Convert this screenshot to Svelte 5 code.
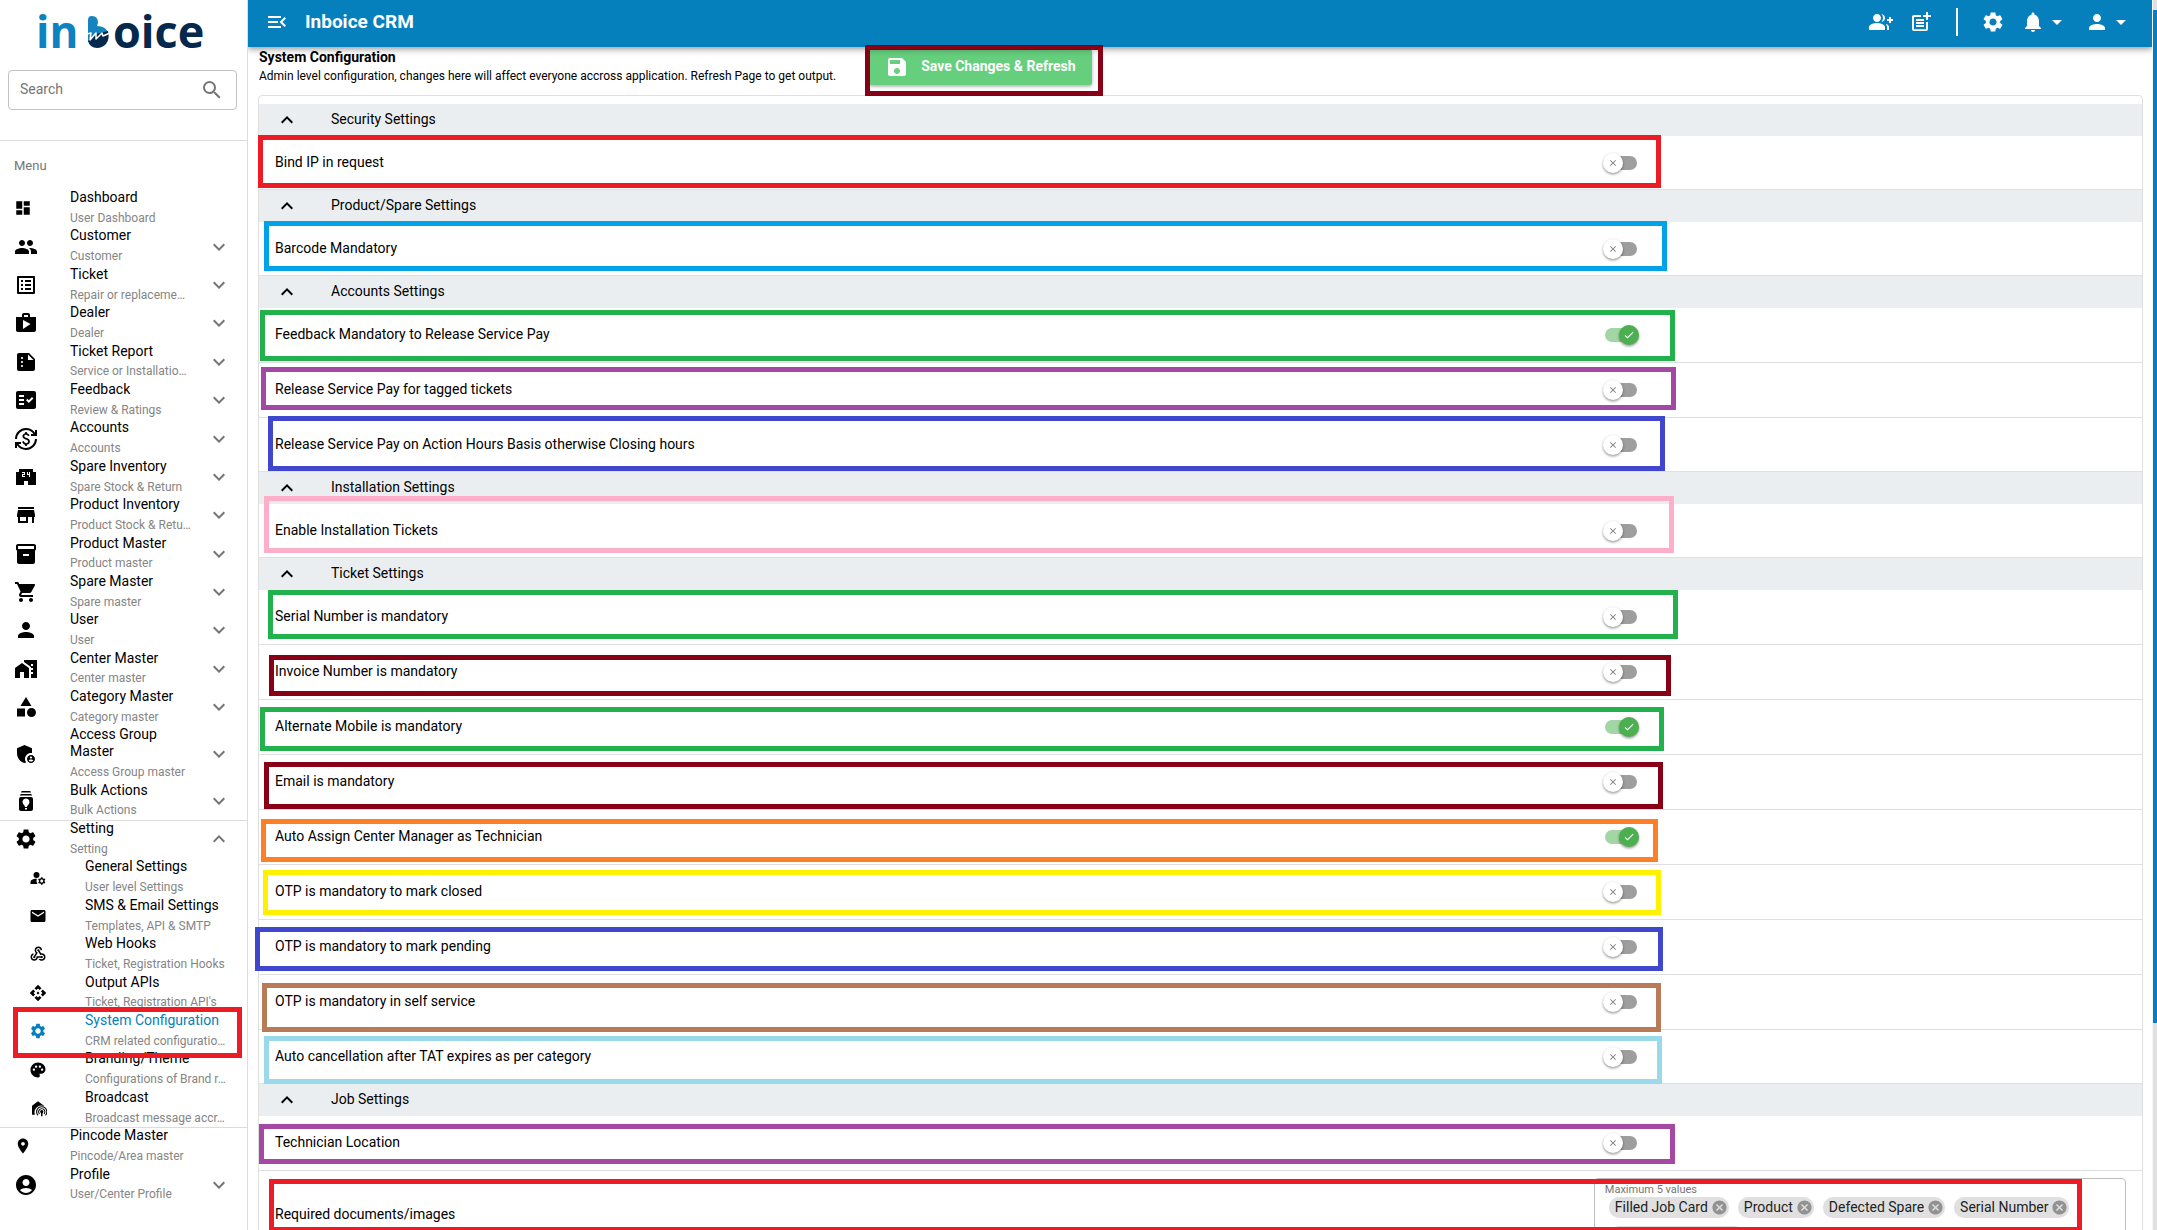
<script>
  const icons = {
    dashboard: 'M3 13h8V3H3v10zm0 8h8v-6H3v6zm10 0h8V11h-8v10zm0-18v6h8V3h-8z',
    group: 'M16 11c1.66 0 2.99-1.34 2.99-3S17.66 5 16 5c-1.66 0-3 1.34-3 3s1.34 3 3 3zm-8 0c1.66 0 2.99-1.34 2.99-3S9.66 5 8 5C6.34 5 5 6.34 5 8s1.34 3 3 3zm0 2c-2.33 0-7 1.17-7 3.5V19h14v-2.5c0-2.33-4.67-3.5-7-3.5zm8 0c-.29 0-.62.02-.97.05 1.16.84 1.97 1.97 1.97 3.45V19h6v-2.5c0-2.33-4.67-3.5-7-3.5z',
    listAlt: 'M19 5v14H5V5h14m1.1-2H3.9c-.5 0-.9.4-.9.9v16.2c0 .4.4.9.9.9h16.2c.4 0 .9-.5.9-.9V3.9c0-.5-.5-.9-.9-.9zM11 7h6v2h-6V7zm0 4h6v2h-6v-2zm0 4h6v2h-6zM7 7h2v2H7zm0 4h2v2H7zm0 4h2v2H7z',
    shop: 'M16 6V4c0-1.11-.89-2-2-2h-4c-1.11 0-2 .89-2 2v2H2v13c0 1.11.89 2 2 2h16c1.11 0 2-.89 2-2V6h-6zm-6-2h4v2h-4V4zM9 18V9l7.5 4L9 18z',
    summarize: 'M15 3H5c-1.1 0-1.99.9-1.99 2L3 19c0 1.1.89 2 1.99 2H19c1.1 0 2-.9 2-2V9l-6-6zM8 17c-.55 0-1-.45-1-1s.45-1 1-1 1 .45 1 1-.45 1-1 1zm0-4c-.55 0-1-.45-1-1s.45-1 1-1 1 .45 1 1-.45 1-1 1zm0-4c-.55 0-1-.45-1-1s.45-1 1-1 1 .45 1 1-.45 1-1 1zm6 1V4.5l5.5 5.5H14z',
    factCheck: 'M20 3H4c-1.1 0-2 .9-2 2v14c0 1.1.9 2 2 2h16c1.1 0 2-.9 2-2V5c0-1.1-.9-2-2-2zM10 17H5v-2h5v2zm0-4H5v-2h5v2zm0-4H5V7h5v2zm4.82 6L12 12.16l1.41-1.41 1.41 1.42L17.99 9l1.42 1.42L14.82 15z',
    currency: 'M12.89 11.1c-1.78-.59-2.64-.96-2.64-1.9 0-1.02 1.11-1.39 1.81-1.39 1.31 0 1.79.99 1.9 1.34l1.58-.67c-.15-.44-.82-1.91-2.66-2.23V5h-1.75v1.26c-2.6.56-2.62 2.85-2.62 2.96 0 2.27 2.25 2.91 3.35 3.31 1.58.56 2.28 1.07 2.28 2.03 0 1.13-1.05 1.61-1.98 1.61-1.82 0-2.34-1.87-2.4-2.09l-1.66.67c.63 2.19 2.28 2.78 3.02 2.96V19h1.75v-1.24c.52-.09 3.02-.59 3.02-3.22.01-1.39-.6-2.61-3-3.44zM3 21H1v-6h6v2H4.52c1.61 2.41 4.36 4 7.48 4a9 9 0 0 0 9-9h2c0 6.08-4.92 11-11 11-3.72 0-7.01-1.85-9-4.67V21zm-2-9C1 5.92 5.92 1 12 1c3.72 0 7.01 1.85 9 4.67V3h2v6h-6V7h2.48C17.87 4.59 15.12 3 12 3a9 9 0 0 0-9 9H1z',
    convenience: 'M19 7V4H5v3H2v13h8v-4h4v4h8V7h-3zm-8 3H9v1h2v1H8V9h2V8H8V7h3v3zm5 2h-1v-2h-2V7h1v2h1V7h1v5z',
    store: 'M20 4H4v2h16V4zm1 10v-2l-1-5H4l-1 5v2h1v6h10v-6h4v6h2v-6h1zm-9 4H6v-4h6v4z',
    inventory: 'M20 2H4c-1 0-2 .9-2 2v3.01c0 .72.43 1.34 1 1.69V20c0 1.1 1.1 2 2 2h14c.9 0 2-.9 2-2V8.7c.57-.35 1-.97 1-1.69V4c0-1.1-1-2-2-2zm-5 12H9v-2h6v2zm5-7H4V4h16v3z',
    cart: 'M7 18c-1.1 0-1.99.9-1.99 2S5.9 22 7 22s2-.9 2-2-.9-2-2-2zM1 2v2h2l3.6 7.59-1.35 2.45c-.16.28-.25.61-.25.96 0 1.1.9 2 2 2h12v-2H7.42c-.14 0-.25-.11-.25-.25l.03-.12.9-1.63h7.45c.75 0 1.41-.41 1.75-1.03l3.58-6.49A1.003 1.003 0 0020 4H5.21l-.94-2H1zm16 16c-1.1 0-1.99.9-1.99 2s.89 2 1.99 2 2-.9 2-2-.9-2-2-2z',
    person: 'M12 12c2.21 0 4-1.79 4-4s-1.79-4-4-4-4 1.79-4 4 1.79 4 4 4zm0 2c-2.67 0-8 1.34-8 4v2h16v-2c0-2.66-5.33-4-8-4z',
    homeWork: 'M1 11v10h5v-6h4v6h5V11L8 6zM10 3v1.97l7 5V11h2v2h-2v2h2v2h-2v4h6V3H10zm9 6h-2V7h2v2z',
    category: 'M12 2l-5.5 9h11zM3 13.5h8v8H3zM17.5 13a4.5 4.5 0 1 0 0 9 4.5 4.5 0 0 0 0-9z',
    admin: 'M17 11c.34 0 .67.04 1 .09V6.27L10.5 3 3 6.27v4.91c0 4.54 3.2 8.79 7.5 9.82.55-.13 1.08-.32 1.6-.55-.69-.98-1.1-2.17-1.1-3.45 0-3.31 2.69-6 6-6zM17 13c-2.21 0-4 1.79-4 4s1.79 4 4 4 4-1.79 4-4-1.79-4-4-4zm0 1.38c.62 0 1.12.51 1.12 1.12s-.51 1.12-1.12 1.12-1.12-.51-1.12-1.12.5-1.12 1.12-1.12zm0 5.37c-.93 0-1.74-.46-2.24-1.17.05-.72 1.51-1.08 2.24-1.08s2.19.36 2.24 1.08c-.5.71-1.31 1.17-2.24 1.17z',
    batch: 'M17 8H7c-1.1 0-2 .9-2 2v10c0 1.1.9 2 2 2h10c1.1 0 2-.9 2-2V10c0-1.1-.9-2-2-2zm-4 12.5h-2V19h2v1.5zm0-2.5h-2c0-1.5-2.5-3-2.5-5 0-1.93 1.57-3.5 3.5-3.5s3.5 1.57 3.5 3.5c0 2-2.5 3.5-2.5 5zm5-11.5H6C6 5.67 6.67 5 7.5 5h9c.83 0 1.5.67 1.5 1.5zm-1-3H7C7 2.67 7.67 2 8.5 2h7c.83 0 1.5.67 1.5 1.5z',
    settings: 'M19.14 12.94c.04-.3.06-.61.06-.94 0-.32-.02-.64-.07-.94l2.03-1.58c.18-.14.23-.41.12-.61l-1.92-3.32c-.12-.22-.37-.29-.59-.22l-2.39.96c-.5-.38-1.03-.7-1.62-.94l-.36-2.54c-.04-.24-.24-.41-.48-.41h-3.84c-.24 0-.43.17-.47.41l-.36 2.54c-.59.24-1.13.57-1.62.94l-2.39-.96c-.22-.08-.47 0-.59.22L2.74 8.87c-.12.21-.08.47.12.61l2.03 1.58c-.05.3-.09.63-.09.94s.02.64.07.94l-2.03 1.58c-.18.14-.23.41-.12.61l1.92 3.32c.12.22.37.29.59.22l2.39-.96c.5.38 1.03.7 1.62.94l.36 2.54c.05.24.24.41.48.41h3.84c.24 0 .44-.17.47-.41l.36-2.54c.59-.24 1.13-.56 1.62-.94l2.39.96c.22.08.47 0 .59-.22l1.92-3.32c.12-.22.07-.47-.12-.61l-2.01-1.58zM12 15.6c-1.98 0-3.6-1.62-3.6-3.6s1.62-3.6 3.6-3.6 3.6 1.62 3.6 3.6-1.62 3.6-3.6 3.6z',
    manage: 'M10 4a4 4 0 1 0 0 8 4 4 0 0 0 0-8zM10.67 13.02c-.22-.01-.44-.02-.67-.02-2.42 0-4.68.67-6.61 1.82-.88.52-1.39 1.5-1.39 2.53V20h9.26c-.79-1.13-1.26-2.51-1.26-4 0-1.07.25-2.07.67-2.98zM20.75 16c0-.22-.03-.42-.06-.63l1.14-1.01-1-1.73-1.45.49c-.32-.27-.68-.48-1.08-.63L18 11h-2l-.3 1.49c-.4.15-.76.36-1.08.63l-1.45-.49-1 1.73 1.14 1.01c-.03.21-.06.41-.06.63s.03.42.06.63l-1.14 1.01 1 1.73 1.45-.49c.32.27.68.48 1.08.63L16 21h2l.3-1.49c.4-.15.76-.36 1.08-.63l1.45.49 1-1.73-1.14-1.01c.03-.21.06-.41.06-.63zM17 18c-1.1 0-2-.9-2-2s.9-2 2-2 2 .9 2 2-.9 2-2 2z',
    mail: 'M20 4H4c-1.1 0-1.99.9-1.99 2L2 18c0 1.1.9 2 2 2h16c1.1 0 2-.9 2-2V6c0-1.1-.9-2-2-2zm0 4l-8 5-8-5V6l8 5 8-5v2z',
    webhook: 'M10 15h5.88c.27-.31.67-.5 1.12-.5.83 0 1.5.67 1.5 1.5 0 .83-.67 1.5-1.5 1.5-.44 0-.84-.19-1.12-.5H11.9c-.46 2.28-2.48 4-4.9 4-2.76 0-5-2.24-5-5 0-2.42 1.72-4.44 4-4.9v2.07C4.84 13.58 4 14.7 4 16c0 1.65 1.35 3 3 3s3-1.35 3-3v-1zM12.5 4c1.65 0 3 1.35 3 3h2c0-2.76-2.24-5-5-5s-5 2.24-5 5c0 1.43.6 2.71 1.55 3.62l-2.35 3.9C6.02 14.66 5.5 15.27 5.5 16c0 .83.67 1.5 1.5 1.5s1.5-.67 1.5-1.5c0-.16-.02-.31-.07-.45l3.38-5.63C10.49 9.61 9.5 8.42 9.5 7c0-1.65 1.35-3 3-3zM17 13c-.64 0-1.23.2-1.72.54l-3.05-5.07C11.53 8.35 11 7.74 11 7c0-.83.67-1.5 1.5-1.5S14 6.17 14 7c0 .15-.02.29-.06.43l2.19 3.65C16.41 11.03 16.7 11 17 11c2.76 0 5 2.24 5 5s-2.24 5-5 5c-1.85 0-3.47-1.01-4.33-2.5h2.67c.48.32 1.05.5 1.66.5 1.65 0 3-1.35 3-3s-1.35-3-3-3z',
    api: 'M14 12l-2 2-2-2 2-2 2 2zm-2-6l2.12 2.12 2.5-2.5L12 1 7.38 5.62l2.5 2.5L12 6zm-6 6l2.12-2.12-2.5-2.5L1 12l4.62 4.62 2.5-2.5L6 12zm12 0l-2.12 2.12 2.5 2.5L23 12l-4.62-4.62-2.5 2.5L18 12zm-6 6l-2.12-2.12-2.5 2.5L12 23l4.62-4.62-2.5-2.5L12 18z',
    palette: 'M12 2C6.49 2 2 6.49 2 12s4.49 10 10 10c1.38 0 2.5-1.12 2.5-2.5 0-.61-.23-1.2-.64-1.67-.08-.1-.13-.21-.13-.33 0-.28.22-.5.5-.5H16c3.31 0 6-2.69 6-6 0-4.96-4.49-9-10-9zm5.5 11c-.83 0-1.5-.67-1.5-1.5s.67-1.5 1.5-1.5 1.5.67 1.5 1.5-.67 1.5-1.5 1.5zm-3-4c-.83 0-1.5-.67-1.5-1.5S13.67 6 14.5 6s1.5.67 1.5 1.5S15.33 9 14.5 9zM5 11.5c0-.83.67-1.5 1.5-1.5s1.5.67 1.5 1.5S7.33 13 6.5 13 5 12.33 5 11.5zm6-4c0 .83-.67 1.5-1.5 1.5S8 8.33 8 7.5 8.67 6 9.5 6s1.5.67 1.5 1.5z',
    broadcast: 'M4 9l8-6 8 6v.6a9 9 0 0 0-12 11.4H4zM17 14.8a2.2 2.2 0 0 0-1 4.1V23h2v-4.1a2.2 2.2 0 0 0-1-4.1zM17 12.2a4.8 4.8 0 0 0-3.5 8.1l1-1a3.4 3.4 0 1 1 5 0l1 1a4.8 4.8 0 0 0-3.5-8.1zM17 9.5a7.5 7.5 0 0 0-5.4 12.7l1-1a6.1 6.1 0 1 1 8.8 0l1 1A7.5 7.5 0 0 0 17 9.5z',
    place: 'M12 2C8.13 2 5 5.13 5 9c0 5.25 7 13 7 13s7-7.75 7-13c0-3.87-3.13-7-7-7zm0 9.5c-1.38 0-2.5-1.12-2.5-2.5s1.12-2.5 2.5-2.5 2.5 1.12 2.5 2.5-1.12 2.5-2.5 2.5z',
    account: 'M12 2C6.48 2 2 6.48 2 12s4.48 10 10 10 10-4.48 10-10S17.52 2 12 2zm0 4c1.93 0 3.5 1.57 3.5 3.5S13.93 13 12 13s-3.5-1.57-3.5-3.5S10.07 6 12 6zm0 14c-2.03 0-4.43-.82-6.14-2.88a9.947 9.947 0 0 1 12.28 0C16.43 19.18 14.03 20 12 20z',
    menuOpen: 'M3 18h13v-2H3v2zm0-5h10v-2H3v2zm0-7v2h13V6H3zm18 9.59L17.42 12 21 8.41 19.59 7l-5 5 5 5L21 15.59z',
    groupAdd: 'M22 9V7h-2v2h-2v2h2v2h2v-2h2V9zM8 12c2.21 0 4-1.79 4-4s-1.79-4-4-4-4 1.79-4 4 1.79 4 4 4zm0 1c-2.67 0-8 1.34-8 4v3h16v-3c0-2.66-5.33-4-8-4zM12.51 4.05C13.43 5.11 14 6.49 14 8s-.57 2.89-1.49 3.95C14.47 11.7 16 10.04 16 8s-1.53-3.7-3.49-3.95zM16.53 13.83C17.42 14.66 18 15.7 18 17v3h2v-3c0-1.45-1.59-2.51-3.47-3.17z',
    postAdd: 'M17 19.22H5V7h7V5H5c-1.1 0-2 .9-2 2v12c0 1.1.9 2 2 2h12c1.1 0 2-.9 2-2v-7h-2v7.22zM19 2h-2v3h-3v2h3v3h2V7h3V5h-3V2zM7 9h8v2H7zm0 3v2h8v-2H7zm0 3h8v2H7z',
    bell: 'M12 22c1.1 0 2-.9 2-2h-4c0 1.1.89 2 2 2zm6-6v-5c0-3.07-1.64-5.64-4.5-6.32V4c0-.83-.67-1.5-1.5-1.5s-1.5.67-1.5 1.5v.68C7.63 5.36 6 7.92 6 11v5l-2 2v1h16v-1l-2-2z',
    dropDown: 'M7 10l5 5 5-5z',
    save: 'M17 3H5c-1.11 0-2 .9-2 2v14c0 1.1.89 2 2 2h14c1.1 0 2-.9 2-2V7l-4-4zm-5 16c-1.66 0-3-1.34-3-3s1.34-3 3-3 3 1.34 3 3-1.34 3-3 3zm3-10H5V5h10v4z',
    search: 'M15.5 14h-.79l-.28-.27A6.471 6.471 0 0016 9.5 6.5 6.5 0 109.5 16c1.61 0 3.09-.59 4.23-1.57l.27.28v.79l5 4.99L20.49 19l-4.99-5zm-6 0C7.01 14 5 11.99 5 9.5S7.01 5 9.5 5 14 7.01 14 9.5 11.99 14 9.5 14z',
    down: 'M7.41 8.59L12 13.17l4.59-4.58L18 10l-6 6-6-6 1.41-1.41z',
    up: 'M7.41 15.41L12 10.83l4.59 4.58L18 14l-6-6-6 6z',
    cancel: 'M12 2C6.47 2 2 6.47 2 12s4.47 10 10 10 10-4.47 10-10S17.53 2 12 2zm5 13.59L15.59 17 12 13.41 8.41 17 7 15.59 10.59 12 7 8.41 8.41 7 12 10.59 15.59 7 17 8.41 13.41 12 17 15.59z',
    close: 'M19 6.41L17.59 5 12 10.59 6.41 5 5 6.41 10.59 12 5 17.59 6.41 19 12 13.41 17.59 19 19 17.59 13.41 12z',
    check: 'M9 16.17L4.83 12l-1.42 1.41L9 19 21 7l-1.41-1.41z'
  };

  const menu = [
    { icon: 'dashboard', label: 'Dashboard', caption: 'User Dashboard', small: true },
    { icon: 'group', label: 'Customer', caption: 'Customer', arrow: 'down' },
    { icon: 'listAlt', label: 'Ticket', caption: 'Repair or replaceme…', arrow: 'down' },
    { icon: 'shop', label: 'Dealer', caption: 'Dealer', arrow: 'down' },
    { icon: 'summarize', label: 'Ticket Report', caption: 'Service or Installatio…', arrow: 'down' },
    { icon: 'factCheck', label: 'Feedback', caption: 'Review & Ratings', arrow: 'down' },
    { icon: 'currency', label: 'Accounts', caption: 'Accounts', arrow: 'down' },
    { icon: 'convenience', label: 'Spare Inventory', caption: 'Spare Stock & Return', arrow: 'down' },
    { icon: 'store', label: 'Product Inventory', caption: 'Product Stock & Retu…', arrow: 'down' },
    { icon: 'inventory', label: 'Product Master', caption: 'Product master', arrow: 'down' },
    { icon: 'cart', label: 'Spare Master', caption: 'Spare master', arrow: 'down' },
    { icon: 'person', label: 'User', caption: 'User', arrow: 'down' },
    { icon: 'homeWork', label: 'Center Master', caption: 'Center master', arrow: 'down' },
    { icon: 'category', label: 'Category Master', caption: 'Category master', arrow: 'down' },
    { icon: 'admin', label: 'Access Group Master', caption: 'Access Group master', arrow: 'down' },
    { icon: 'batch', label: 'Bulk Actions', caption: 'Bulk Actions', arrow: 'down' },
    { icon: 'settings', label: 'Setting', caption: 'Setting', arrow: 'up', line: true },
    { icon: 'manage', label: 'General Settings', caption: 'User level Settings', sub: true },
    { icon: 'mail', label: 'SMS & Email Settings', caption: 'Templates, API & SMTP', sub: true },
    { icon: 'webhook', label: 'Web Hooks', caption: 'Ticket, Registration Hooks', sub: true },
    { icon: 'api', label: 'Output APIs', caption: "Ticket, Registration API's", sub: true },
    { icon: 'settings', label: 'System Configuration', caption: 'CRM related configuratio…', sub: true, active: true },
    { icon: 'palette', label: 'Branding/Theme', caption: 'Configurations of Brand r…', sub: true },
    { icon: 'broadcast', label: 'Broadcast', caption: 'Broadcast message accr…', sub: true },
    { icon: 'place', label: 'Pincode Master', caption: 'Pincode/Area master', small: true, line: true },
    { icon: 'account', label: 'Profile', caption: 'User/Center Profile', arrow: 'down' }
  ];

  // mark: [colour, left, top, width, height] of the highlight frame, measured from its row
  const groups = $state([
    { title: 'Security Settings', open: true, rows: [
      { label: 'Bind IP in request', on: false, mark: ['#ed1c24', -1, -1, 1403, 53] }
    ] },
    { title: 'Product/Spare Settings', open: true, rows: [
      { label: 'Barcode Mandatory', on: false, mark: ['#00a2e8', 5, -1, 1403, 50] }
    ] },
    { title: 'Accounts Settings', open: true, rows: [
      { label: 'Feedback Mandatory to Release Service Pay', on: true, mark: ['#22b14c', 1, 2, 1415, 51] },
      { label: 'Release Service Pay for tagged tickets', on: false, mark: ['#a349a4', 2, 4, 1415, 43] },
      { label: 'Release Service Pay on Action Hours Basis otherwise Closing hours', on: false, mark: ['#3f48cc', 9, -2, 1397, 55] }
    ] },
    { title: 'Installation Settings', open: true, rows: [
      { label: 'Enable Installation Tickets', on: false, mark: ['#ffaec9', 5, -8, 1410, 57] }
    ] },
    { title: 'Ticket Settings', open: true, rows: [
      { label: 'Serial Number is mandatory', on: false, mark: ['#22b14c', 9, 0, 1410, 49] },
      { label: 'Invoice Number is mandatory', on: false, mark: ['#880015', 10, 10, 1402, 41] },
      { label: 'Alternate Mobile is mandatory', on: true, mark: ['#22b14c', 1, 7, 1404, 44] },
      { label: 'Email is mandatory', on: false, mark: ['#880015', 5, 7, 1399, 47] },
      { label: 'Auto Assign Center Manager as Technician', on: true, mark: ['#ff7f27', 2, 9, 1397, 43] },
      { label: 'OTP is mandatory to mark closed', on: false, mark: ['#fff200', 4, 5, 1398, 45] },
      { label: 'OTP is mandatory to mark pending', on: false, mark: ['#3f48cc', -4, 7, 1408, 44] },
      { label: 'OTP is mandatory in self service', on: false, mark: ['#b97a57', 3, 8, 1399, 49] },
      { label: 'Auto cancellation after TAT expires as per category', on: false, mark: ['#99d9ea', 5, 6, 1398, 48] }
    ] },
    { title: 'Job Settings', open: true, rows: [
      { label: 'Technician Location', on: false, mark: ['#a349a4', 0, 8, 1416, 40] },
      { label: 'Required documents/images', chips: ['Filled Job Card', 'Product', 'Defected Spare', 'Serial Number'], mark: ['#ed1c24', 10, 8, 1813, 53] }
    ] }
  ]);
</script>

{#snippet icon(name)}
  <svg class="icon" viewBox="0 0 24 24" aria-hidden="true"><path d={icons[name]} /></svg>
{/snippet}

{#snippet itemBody(m)}
  <span class="item-icon">{@render icon(m.icon)}</span>
  <span class="item-text">
    <span class="item-label">{m.label}</span>
    <span class="item-caption">{m.caption}</span>
  </span>
  {#if m.arrow}<span class="item-arrow">{@render icon(m.arrow)}</span>{/if}
{/snippet}

<div class="app">
  <aside class="sidebar">
    <div class="brand">
      <svg class="logo" viewBox="0 0 248 64" role="img" aria-label="inboice">
        <text class="logo-text logo-light" x="36" y="48">in</text>
        <path fill="#1583be" d="M88 20q0-4 4-4 6 0 6 7l-1 3q9 0 11 7l-20 9z" />
        <path fill="#04294c" d="M88 41l8-7 12-3q2 8-2 13-4 4-9 4-7 0-9-7z" />
        <path fill="none" stroke="#fff" stroke-width="1.5" stroke-linejoin="round" d="M87 34l4-1-1 7 6-7v6l6-6 1 3 7-3" />
        <text class="logo-text logo-dark" x="113" y="48">oice</text>
      </svg>
    </div>
    <div class="search">
      <input type="text" placeholder="Search" aria-label="Search" />
      {@render icon('search')}
    </div>
    <nav class="nav">
      <div class="nav-title">Menu</div>
      {#each menu as m}
        <div class="nav-row" class:line={m.line}>
          {#if m.arrow}
            <button class="item" type="button">{@render itemBody(m)}</button>
          {:else}
            <a class="item" class:small={m.small} class:sub={m.sub} class:active={m.active} href="#page">{@render itemBody(m)}</a>
          {/if}
          {#if m.active}<span class="mark mark-nav"></span>{/if}
        </div>
      {/each}
    </nav>
  </aside>

  <main class="main">
    <header class="toolbar">
      <button class="tool" type="button" aria-label="Toggle menu">{@render icon('menuOpen')}</button>
      <h1>Inboice CRM</h1>
      <div class="tools">
        <button class="tool" type="button" aria-label="Add customer">{@render icon('groupAdd')}</button>
        <button class="tool" type="button" aria-label="Add ticket">{@render icon('postAdd')}</button>
        <span class="divider"></span>
        <button class="tool" type="button" aria-label="Settings">{@render icon('settings')}</button>
        <button class="tool" type="button" aria-label="Notifications">{@render icon('bell')}{@render icon('dropDown')}</button>
        <button class="tool" type="button" aria-label="Account">{@render icon('person')}{@render icon('dropDown')}</button>
      </div>
    </header>

    <div class="page-head">
      <div>
        <h2>System Configuration</h2>
        <p>Admin level configuration, changes here will affect everyone accross application. Refresh Page to get output.</p>
      </div>
      <div class="save-wrap">
        <button class="save" type="button">{@render icon('save')}<span class="caps">Save Changes &amp; Refresh</span></button>
        <span class="mark mark-save"></span>
      </div>
    </div>

    <section class="card">
      {#each groups as g, gi}
        <div class="group">
          <button class="group-head" type="button" aria-expanded={g.open} onclick={() => (g.open = !g.open)}>
            {@render icon(g.open ? 'up' : 'down')}<span class="caps">{g.title}</span>
          </button>
          {#if g.open}
            <div class="rows">
              {#each g.rows as r, ri}
                <div class="row" class:tall={r.chips}>
                  <label class="caps" for="opt-{gi}-{ri}">{r.label}</label>
                  {#if r.chips}
                    <div class="field">
                      <span class="field-label">Maximum 5 values</span>
                      <div class="chips">
                        {#each r.chips as c}
                          <span class="chip"><span class="caps">{c}</span><button type="button" aria-label="Remove {c}">{@render icon('cancel')}</button></span>
                        {/each}
                        <span class="chip chip-blank"></span>
                        <input id="opt-{gi}-{ri}" class="chip-input" type="text" />
                      </div>
                    </div>
                  {:else}
                    <span class="toggle" class:on={r.on}>
                      <input id="opt-{gi}-{ri}" type="checkbox" bind:checked={r.on} />
                      <span class="track"></span>
                      <span class="knob">{@render icon(r.on ? 'check' : 'close')}</span>
                    </span>
                  {/if}
                  <span
                    class="mark"
                    style="border-color:{r.mark[0]};left:{r.mark[1]}px;top:{r.mark[2]}px;width:{r.mark[3]}px;height:{r.mark[4]}px"
                  ></span>
                </div>
              {/each}
            </div>
          {/if}
        </div>
      {/each}
    </section>
  </main>

  <div class="rail"><div class="thumb"></div></div>
</div>

<style>
  :global(body) {
    margin: 0;
    background: #fff;
    font-family: Roboto, 'Liberation Sans', sans-serif;
    font-size: 14px;
    color: #000;
  }
  .app {
    display: flex;
    height: 100vh;
    overflow: hidden;
  }
  .app *,
  .app *::before {
    box-sizing: border-box;
  }
  button,
  input {
    font: inherit;
    color: inherit;
    background: none;
    border: 0;
    padding: 0;
    margin: 0;
  }
  button {
    cursor: pointer;
    text-align: left;
  }
  a {
    color: inherit;
    text-decoration: none;
  }
  .icon {
    display: block;
    flex: none;
    width: 24px;
    height: 24px;
    fill: currentColor;
  }
  .caps {
    padding-bottom: 2px;
  }
  .mark {
    position: absolute;
    z-index: 20;
    border: 5px solid #ed1c24;
    pointer-events: none;
  }

  /* sidebar */
  .sidebar {
    flex: none;
    width: 248px;
    border-right: 1px solid #dcdcdc;
    overflow: hidden;
  }
  .brand {
    height: 70px;
  }
  .logo {
    display: block;
    width: 248px;
    height: 64px;
  }
  .logo-text {
    font-family: 'Open Sans', sans-serif;
    font-weight: 700;
    font-size: 44px;
  }
  .logo-light {
    fill: #0c82c0;
  }
  .logo-dark {
    fill: #04294c;
    font-size: 45px;
  }
  .search {
    display: flex;
    align-items: center;
    height: 40px;
    margin: 0 10px 30px 8px;
    padding: 0 12px 0 11px;
    border: 1px solid #c2c2c2;
    border-radius: 4px;
    color: #757575;
  }
  .search input {
    flex: 1;
    min-width: 0;
    padding-bottom: 2px;
    outline: 0;
  }
  .search input::placeholder {
    color: #757575;
    opacity: 1;
  }
  .nav {
    border-top: 1px solid #dcdcdc;
  }
  .nav-title {
    height: 48px;
    padding-left: 14px;
    font-size: 13px;
    line-height: 49px;
    color: #757575;
  }
  .nav-row {
    position: relative;
  }
  .nav-row.line::before {
    content: '';
    position: absolute;
    top: 0;
    left: 0;
    right: 0;
    border-top: 1px solid #dcdcdc;
  }
  .item {
    display: flex;
    align-items: center;
    width: 100%;
    padding: 0 16px 0 14px;
  }
  .item-icon {
    flex: none;
    width: 56px;
  }
  .small .icon,
  .sub .icon {
    width: 18px;
    height: 18px;
  }
  .sub {
    padding-left: 29px;
  }
  .item-text {
    flex: 1;
    min-width: 0;
  }
  .item-label,
  .item-caption {
    display: block;
  }
  .item-label {
    line-height: 1.2;
  }
  .item-caption {
    margin-bottom: -2px;
    padding-top: 2px;
    font-size: 12px;
    line-height: 1.8;
    white-space: nowrap;
    color: #858585;
  }
  .item-arrow {
    padding-left: 16px;
    color: #757575;
  }
  .active .icon,
  .active .item-label {
    color: #0680bc;
  }
  .mark-nav {
    top: -5px;
    left: 13px;
    right: 5px;
    height: 51px;
  }

  /* top bar */
  .main {
    flex: 1;
    min-width: 0;
    overflow: hidden;
  }
  .toolbar {
    position: relative;
    z-index: 10;
    display: flex;
    align-items: center;
    height: 47px;
    padding: 0 19px 3px 17px;
    background: #0680bc;
    color: #fff;
    box-shadow: 0 2px 4px -1px rgba(0, 0, 0, 0.2), 0 4px 5px rgba(0, 0, 0, 0.14), 0 1px 10px rgba(0, 0, 0, 0.12);
  }
  h1 {
    flex: 1;
    margin: 0 0 0 16px;
    font-size: 19px;
    font-weight: 700;
    line-height: 24px;
  }
  .tools {
    display: flex;
    align-items: center;
    gap: 16px;
  }
  .tool {
    display: flex;
  }
  .divider {
    width: 2px;
    height: 28px;
    margin: 0 7px;
    background: #fff;
  }

  /* page heading */
  .page-head {
    display: flex;
    align-items: flex-start;
    gap: 33px;
    height: 48px;
    padding: 2px 10px 0 11px;
  }
  h2 {
    margin: 0;
    font-size: 14px;
    font-weight: 700;
    line-height: 17px;
  }
  p {
    margin: 0;
    font-size: 12px;
    line-height: 20px;
    white-space: nowrap;
  }
  .save-wrap {
    position: relative;
  }
  .save {
    display: flex;
    align-items: center;
    gap: 12px;
    height: 36px;
    padding: 0 16px;
    border-radius: 3px;
    background: #65cf7d;
    color: #fff;
    font-weight: 700;
    white-space: nowrap;
    box-shadow: 0 1px 5px rgba(0, 0, 0, 0.2), 0 2px 2px rgba(0, 0, 0, 0.14);
  }
  .mark-save {
    top: -4px;
    left: -4px;
    right: -11px;
    height: 51px;
    border-color: #880015;
  }

  /* settings card */
  .card {
    margin: 0 9px 0 10px;
    padding-top: 8px;
    border: 1px solid #dfdfdf;
    border-radius: 4px;
  }
  .group-head {
    display: flex;
    align-items: center;
    gap: 32px;
    width: 100%;
    height: 32px;
    padding: 0 16px;
    background: #ebeef1;
  }
  .row {
    position: relative;
    display: grid;
    grid-template-columns: 57fr 23fr;
    align-items: center;
    height: 55px;
    padding: 0 16px;
    border-bottom: 1px solid #dfdfdf;
  }
  .row:last-child {
    height: 54px;
  }
  .row.tall {
    height: 88px;
  }
  .toggle {
    position: relative;
    width: 32px;
    height: 20px;
    margin-left: 11px;
  }
  .toggle input {
    position: absolute;
    inset: 0;
    z-index: 2;
    width: 100%;
    height: 100%;
    opacity: 0;
    cursor: pointer;
  }
  .track {
    position: absolute;
    inset: 3px 0;
    border-radius: 7px;
    background: #9e9e9e;
  }
  .knob {
    position: absolute;
    top: 0;
    left: -2px;
    display: grid;
    place-items: center;
    width: 20px;
    height: 20px;
    border-radius: 50%;
    background: #fff;
    color: #757575;
    box-shadow: 0 1px 3px rgba(0, 0, 0, 0.3), 0 2px 2px rgba(0, 0, 0, 0.14);
  }
  .knob .icon {
    width: 10px;
    height: 10px;
  }
  .on .track {
    background: #a3d6a5;
  }
  .on .knob {
    left: 14px;
    background: #4caf50;
    color: #fff;
  }
  .on .knob .icon {
    width: 12px;
    height: 12px;
  }
  .field {
    align-self: start;
    height: 74px;
    margin-top: 7px;
    padding: 3px 10px 0;
    border: 1px solid #bdbdbd;
    border-radius: 4px;
  }
  .field-label {
    display: block;
    font-size: 11px;
    line-height: 15px;
    color: #757575;
  }
  .chips {
    display: flex;
    flex-wrap: wrap;
    gap: 8px 9px;
    padding: 0 4px;
  }
  .chip {
    display: flex;
    align-items: center;
    gap: 3px;
    height: 21px;
    padding: 0 1px 0 6px;
    border-radius: 10px;
    background: #e0e0e0;
    color: #222;
  }
  .chip button {
    color: #929292;
  }
  .chip .icon {
    width: 17px;
    height: 17px;
  }
  .chip-blank {
    width: 136px;
  }
  .chip-input {
    flex: 1;
    min-width: 0;
    outline: 0;
  }

  /* page scroll rail */
  .rail {
    flex: none;
    width: 5px;
    padding-top: 10px;
    border-left: 1px solid #f5f5f5;
    background: #e0e0e0;
  }
  .thumb {
    height: 83%;
    background: #0680bc;
  }
</style>
